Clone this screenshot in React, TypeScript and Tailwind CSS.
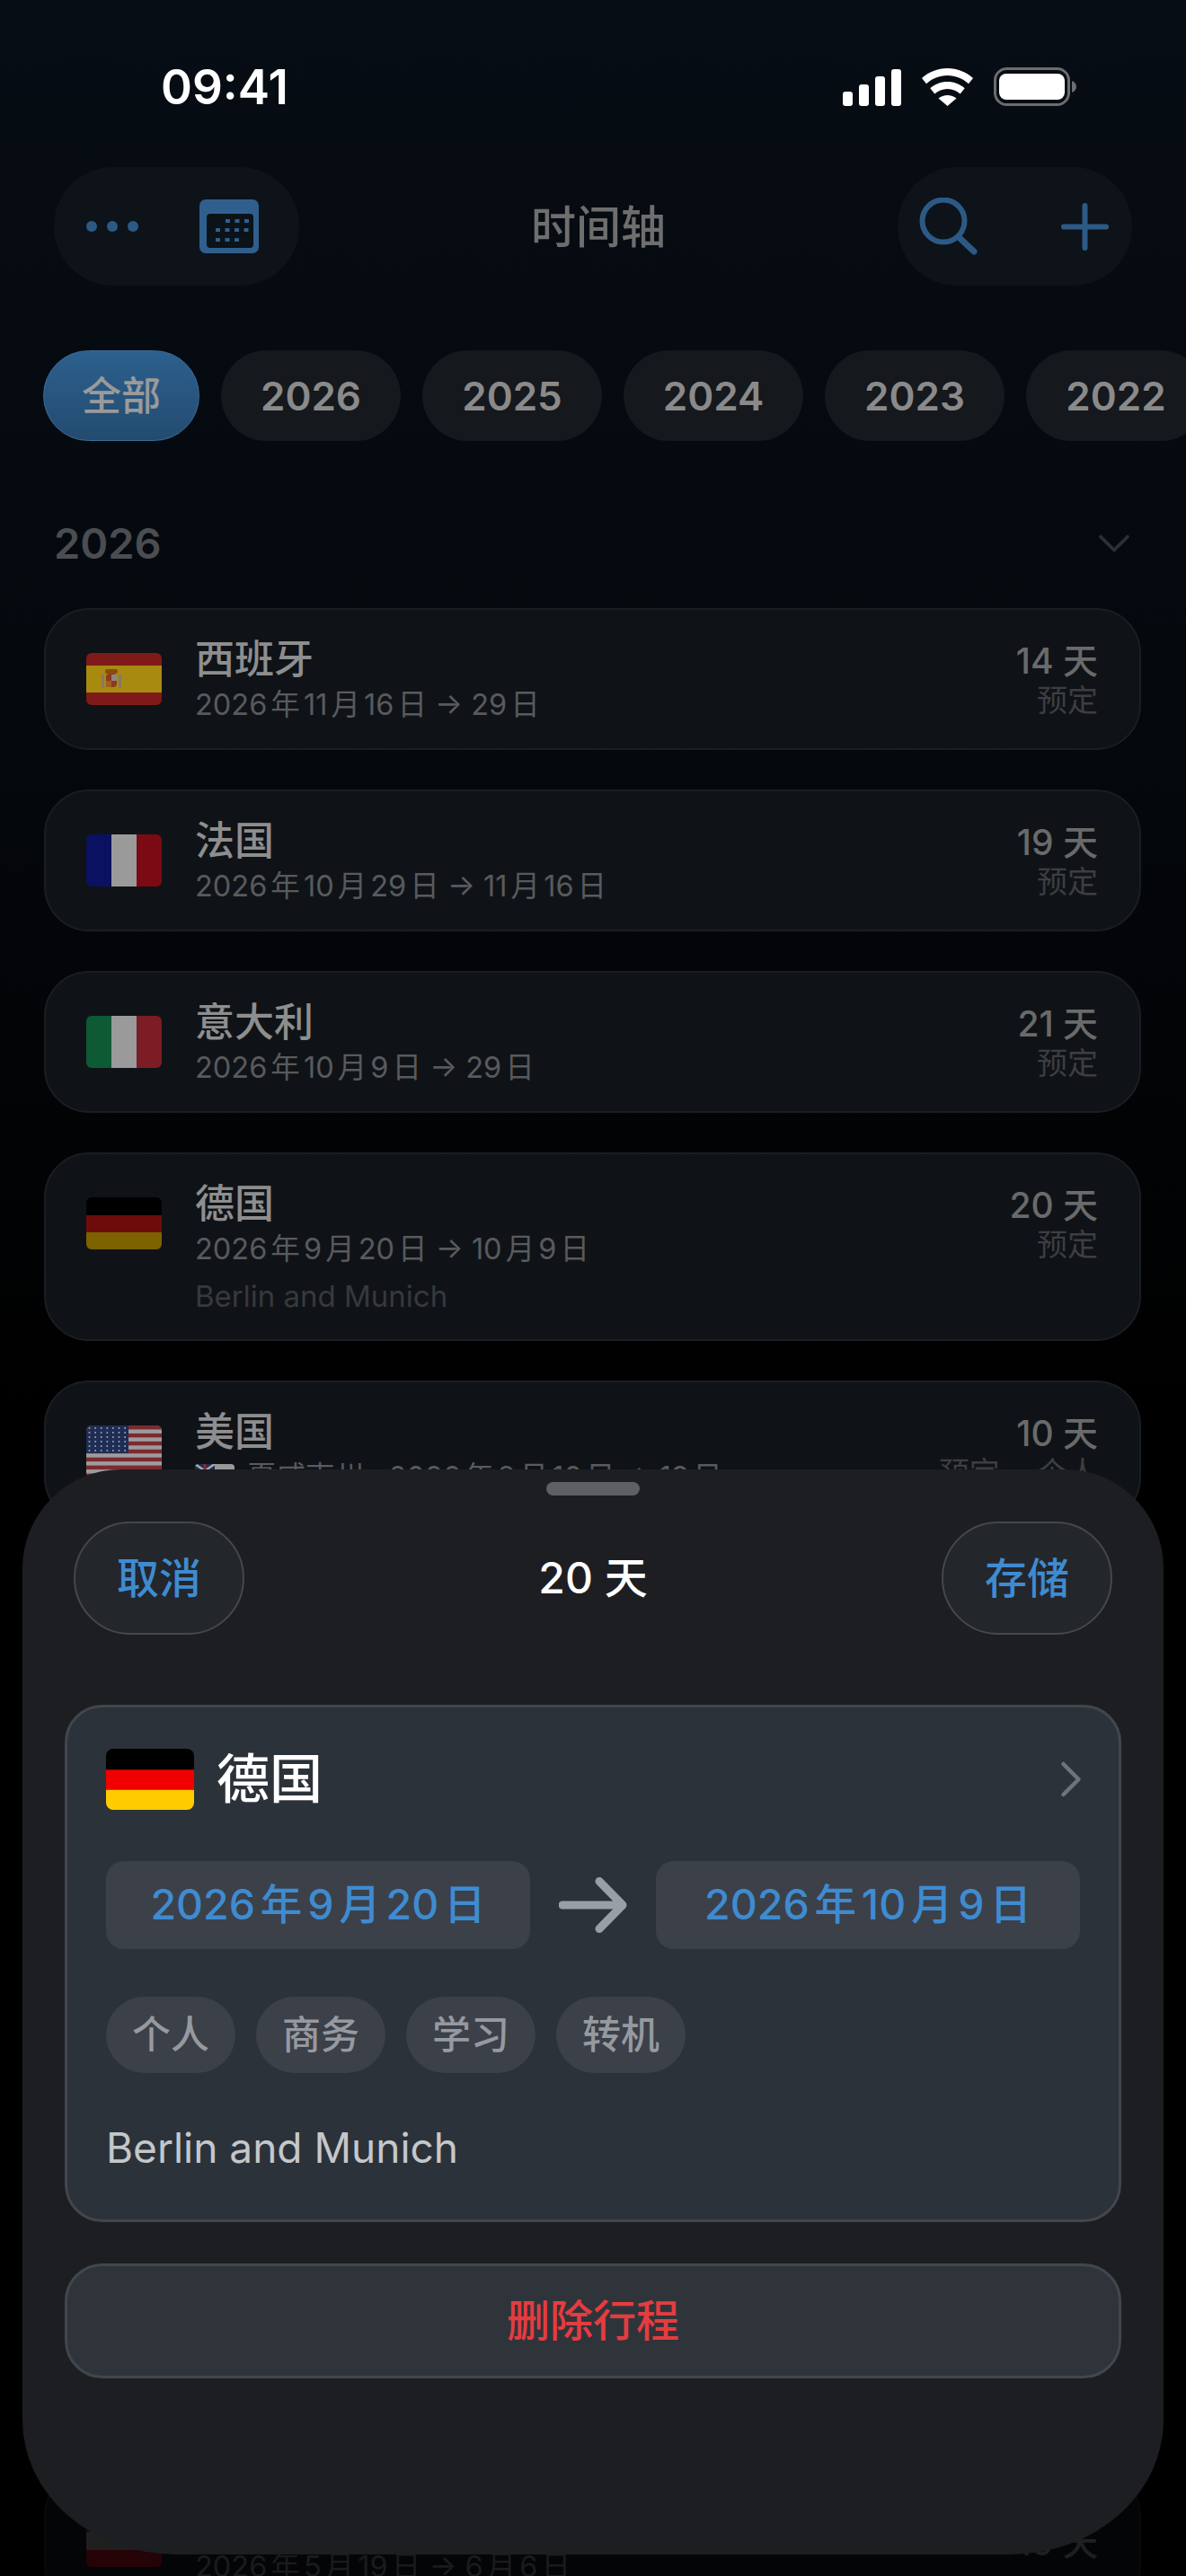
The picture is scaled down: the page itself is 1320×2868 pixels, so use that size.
import type { ReactNode } from 'react';
import { ChevronDown, ChevronRight } from 'lucide-react';

const FONT = "font-['Inter','Noto_Sans_CJK_SC',sans-serif]";

interface Trip {
    name: string;
    dates: string;
    days: string;
    status?: string;
    note?: string;
    flag: ReactNode;
    region?: ReactNode;
    lowDays?: boolean;
}

function Tricolor({ a, b, c }: { a: string; b: string; c: string }) {
    return (
        <svg viewBox="0 0 84 58" className="w-[84px] h-[58px] rounded-[6px] shrink-0">
            <rect width="28" height="58" x="0" fill={a} />
            <rect width="28" height="58" x="28" fill={b} />
            <rect width="28" height="58" x="56" fill={c} />
        </svg>
    );
}

function SpainFlag() {
    return (
        <svg viewBox="0 0 84 58" className="w-[84px] h-[58px] rounded-[6px] shrink-0">
            <rect width="84" height="58" fill="#7f1a18" />
            <rect width="84" height="30" y="14" fill="#a88a10" />
            {/* crown, shield and pillars of the arms */}
            <rect width="14" height="5" x="21" y="18" rx="2" fill="#8a4a18" />
            <rect width="12" height="15" x="22" y="23" rx="4" fill="#8c3a1c" />
            <rect width="6" height="7" x="28" y="24" fill="#8f8478" />
            <rect width="6" height="7" x="22" y="31" fill="#a0601c" />
            <rect width="3" height="15" x="17" y="24" fill="#85786a" />
            <rect width="3" height="15" x="36" y="24" fill="#85786a" />
        </svg>
    );
}

function GermanyFlag({ bright }: { bright?: boolean }) {
    const size = bright ? 'w-[98px] h-[68px] rounded-[8px]' : 'w-[84px] h-[58px] rounded-[6px]';
    return (
        <svg viewBox="0 0 84 58" preserveAspectRatio="none" className={`${size} shrink-0`}>
            <rect width="84" height="20" fill="#000" />
            <rect width="84" height="19" y="20" fill={bright ? '#f00000' : '#6e0c0c'} />
            <rect width="84" height="19" y="39" fill={bright ? '#ffcc00' : '#7d6200'} />
        </svg>
    );
}

function UsaFlag() {
    const stripes = Array.from({ length: 7 }, (_, i) => i * 2);
    const stars = Array.from({ length: 42 }, (_, i) => i);
    return (
        <svg viewBox="0 0 84 58" className="w-[84px] h-[58px] rounded-[6px] shrink-0">
            <rect width="84" height="58" fill="#9c9c9c" />
            {stripes.map((i) => (
                <rect key={i} y={i * 4.46} width="84" height="4.46" fill="#7c2a30" />
            ))}
            <rect width="47" height="31" fill="#1f2d55" />
            {stars.map((i) => (
                <circle key={i} cx={3.5 + (i % 7) * 6.6} cy={3 + Math.floor(i / 7) * 5} r="1" fill="#a0a3ad" />
            ))}
        </svg>
    );
}

function HawaiiFlag() {
    return (
        <svg viewBox="0 0 44 30" className="w-[44px] h-[30px] rounded-[4px] mr-[14px] shrink-0">
            <rect width="44" height="30" fill="#999" />
            <rect width="44" height="5" y="10" fill="#7c2a30" />
            <rect width="22" height="15" fill="#1f2d55" />
            <path d="M0 0L22 15M22 0L0 15" stroke="#aaa" strokeWidth="2.5" />
            <path d="M11 0V15M0 7.5H22" stroke="#8a2a30" strokeWidth="3" />
        </svg>
    );
}

function AustriaFlag() {
    return (
        <svg viewBox="0 0 84 58" className="w-[84px] h-[58px] rounded-[6px] shrink-0">
            <rect width="84" height="58" fill="#7c0a14" />
            <rect width="84" height="20" y="19" fill="#666" />
        </svg>
    );
}

const TRIPS: Trip[] = [
    { name: '西班牙', dates: '2026年11月16日 → 29日', days: '14 天', status: '预定', flag: <SpainFlag /> },
    { name: '法国', dates: '2026年10月29日 → 11月16日', days: '19 天', status: '预定', flag: <Tricolor a="#0a1160" b="#9a9a9a" c="#7c0a14" /> },
    { name: '意大利', dates: '2026年10月9日 → 29日', days: '21 天', status: '预定', flag: <Tricolor a="#0d5a34" b="#9a9a9a" c="#7c1c24" /> },
    { name: '德国', dates: '2026年9月20日 → 10月9日', days: '20 天', status: '预定', note: 'Berlin and Munich', flag: <GermanyFlag /> },
    { name: '美国', dates: '夏威夷州 · 2026年8月10日 → 19日', days: '10 天', status: '预定\u00a0\u2009·\u2009\u00a0个人', flag: <UsaFlag />, region: <HawaiiFlag /> },
];

function TripCard({ trip }: { trip: Trip }) {
    return (
        <div className="rounded-[50px] border-2 border-[#1a1e22] bg-[#0f1317] pl-[45px] pr-[46px] pt-[27px] pb-[27px] flex items-start">
            <div className="mt-[21px] mr-[37px]">{trip.flag}</div>
            <div className="flex-1 min-w-0">
                <div className="text-[44px] leading-[56px] font-medium text-[#8e8e8e]">{trip.name}</div>
                <div className="flex items-center text-[32.5px] leading-[42px] text-[#585a5c] mt-[2px]">
                    {trip.region}
                    <span>{trip.dates}</span>
                </div>
                {trip.note && <div className="text-[33px] leading-[42px] text-[#37393b] mt-[10px]">{trip.note}</div>}
            </div>
            <div className={`text-right ${trip.lowDays ? 'mt-[27px]' : 'mt-[5px]'}`}>
                <div className="text-[39px] leading-[50px] font-medium text-[#6a6a6a]">{trip.days}</div>
                {trip.status && <div className="text-[34px] leading-[38px] text-[#3c3e40]">{trip.status}</div>}
            </div>
        </div>
    );
}

function StatusBar() {
    return (
        <div className="h-[186px] flex justify-between items-start pt-[72px] pl-[179px] pr-[122px]">
            <div className="text-[53px] leading-[50px] font-semibold text-white">09:41</div>
            <div className="flex items-end gap-[23px] pt-[3px]">
                <svg viewBox="0 0 65 41" className="w-[65px] h-[41px]" fill="#fff">
                    <rect x="0" y="25" width="11" height="16" rx="3" />
                    <rect x="18" y="17" width="11" height="24" rx="3" />
                    <rect x="36" y="8" width="11" height="33" rx="3" />
                    <rect x="54" y="0" width="11" height="41" rx="3" />
                </svg>
                <svg viewBox="0 0 57 42" className="w-[57px] h-[42px]" fill="#fff">
                    <path d="M28.5 0C17.5 0 7.8 4 0 11l5 6.2C11.5 11.5 19.5 8 28.5 8s17 3.5 23.5 9.2l5-6.2C49.2 4 39.5 0 28.5 0Z" />
                    <path d="M28.5 15c-7.5 0-14 2.7-19.2 7.2l5 6.2c3.8-3.3 8.7-5.4 14.2-5.4s10.4 2.1 14.2 5.4l5-6.2C42.5 17.7 36 15 28.5 15Z" />
                    <path d="M28.5 30c-3.8 0-7.2 1.3-10 3.5L28.5 42l10-8.5c-2.8-2.2-6.2-3.5-10-3.5Z" />
                </svg>
                <svg viewBox="0 0 92 43" className="w-[92px] h-[43px]">
                    <rect x="1.5" y="1.5" width="82" height="40" rx="13" fill="none" stroke="#6b6d70" strokeWidth="3" />
                    <rect x="6" y="7" width="73" height="29" rx="8" fill="#fff" />
                    <path d="M87 15c3 1 5 3.5 5 6.5s-2 5.5-5 6.5Z" fill="#6b6d70" />
                </svg>
            </div>
        </div>
    );
}

function Toolbar() {
    return (
        <div className="flex items-center justify-between pl-[60px] pr-[60px]">
            <div className="w-[273px] h-[132px] rounded-full bg-[#0d1319] flex items-center justify-between pl-[36px] pr-[45px]">
                <div className="flex gap-[11px]">
                    <span className="w-[12px] h-[12px] rounded-full bg-[#2c5a85]" />
                    <span className="w-[12px] h-[12px] rounded-full bg-[#2c5a85]" />
                    <span className="w-[12px] h-[12px] rounded-full bg-[#2c5a85]" />
                </div>
                <svg viewBox="0 0 66 60" className="w-[66px] h-[60px]">
                    <rect width="66" height="60" rx="7" fill="#2f5f8d" />
                    <rect x="8" y="16" width="52" height="38" rx="4" fill="#0b1218" />
                    {[0, 1, 2].map((i) => <rect key={`a${i}`} x={29 + i * 10.5} y="22" width="5" height="4" fill="#2f5f8d" />)}
                    {[0, 1, 2, 3].map((i) => <rect key={`b${i}`} x={18 + i * 10.5} y="32" width="5" height="4" fill="#2f5f8d" />)}
                    {[0, 1, 2].map((i) => <rect key={`c${i}`} x={18 + i * 10.5} y="43" width="5" height="4" fill="#2f5f8d" />)}
                </svg>
            </div>
            <div className="text-[50px] font-medium text-[#6e6e6e] leading-none mt-[2px]">时间轴</div>
            <div className="w-[261px] h-[132px] rounded-full bg-[#0d1319] flex items-center justify-between pl-[24px] pr-[26px]">
                <svg viewBox="0 0 65 64" className="w-[65px] h-[64px]" fill="none" stroke="#2c5a85" strokeLinecap="round">
                    <circle cx="27" cy="26" r="23.5" strokeWidth="6" />
                    <path d="M44 44L61 60" strokeWidth="7" />
                </svg>
                <svg viewBox="0 0 53 53" className="w-[53px] h-[53px]" fill="none" stroke="#2c5a85" strokeWidth="6" strokeLinecap="round">
                    <path d="M26.5 3V50M3 26.5H50" />
                </svg>
            </div>
        </div>
    );
}

function YearChips() {
    return (
        <div className="flex gap-[24px] pl-[48px] mt-[72px] w-[1400px]">
            <div className="w-[174px] h-[101px] rounded-full bg-gradient-to-b from-[#2c608e] to-[#234b70] border border-[#3a6a94] flex items-center justify-center text-[44px] font-medium text-[#9a9a9a] shrink-0">全部</div>
            {['2026', '2025', '2024', '2023', '2022'].map((year) => (
                <div key={year} className="w-[200px] h-[101px] rounded-full bg-[#15181d] flex items-center justify-center text-[44px] font-semibold text-[#8a8a8a] shrink-0">{year}</div>
            ))}
        </div>
    );
}

function EditSheet() {
    return (
        <div className="absolute left-[25px] top-[1636px] w-[1270px] h-[1208px] rounded-t-[110px] rounded-bl-[170px_150px] rounded-br-[170px_150px] bg-[#1c1e22] px-[47px]">
            <div className="flex justify-center pt-[14px]">
                <div className="w-[104px] h-[15px] rounded-full bg-[#5e6066]" />
            </div>
            <div className="flex items-center justify-between mt-[29px] px-[10px]">
                <div className="w-[190px] h-[126px] rounded-full border-2 border-[#44474e] bg-[#23262b] flex items-center justify-center text-[47px] font-medium text-[#3f8bd0]">取消</div>
                <div className="text-[48px] font-medium text-white">20 天</div>
                <div className="w-[190px] h-[126px] rounded-full border-2 border-[#44474e] bg-[#23262b] flex items-center justify-center text-[47px] font-medium text-[#3f8bd0]">存储</div>
            </div>

            <div className="mt-[78px] h-[576px] rounded-[42px] border-[3px] border-[#42464d] bg-[#2c3239] px-[43px] pt-[46px]">
                <div className="flex items-center h-[68px]">
                    <GermanyFlag bright />
                    <div className="ml-[25px] text-[59px] font-medium text-white">德国</div>
                    <ChevronRight className="ml-auto -mr-[24px] text-[#6f747b] w-[68px] h-[68px]" strokeWidth={1.6} />
                </div>
                <div className="flex items-center justify-between mt-[57px]">
                    <div className="w-[472px] h-[98px] rounded-[20px] bg-[#3c4049] flex items-center justify-center text-[46.5px] font-medium text-[#3f8bd0]">2026年9月20日</div>
                    <svg viewBox="0 0 76 62" className="w-[76px] h-[62px]" fill="none" stroke="#9a9ea6" strokeWidth="9" strokeLinecap="round" strokeLinejoin="round">
                        <path d="M4 31H71M45 4.5L71 31L45 57.5" />
                    </svg>
                    <div className="w-[472px] h-[98px] rounded-[20px] bg-[#3c4049] flex items-center justify-center text-[46.5px] font-medium text-[#3f8bd0]">2026年10月9日</div>
                </div>
                <div className="flex gap-[23px] mt-[53px]">
                    {['个人', '商务', '学习', '转机'].map((tag) => (
                        <div key={tag} className="w-[144px] h-[85px] rounded-full bg-[#3c4049] flex items-center justify-center text-[43px] font-medium text-[#96999f]">{tag}</div>
                    ))}
                </div>
                <div className="mt-[53px] text-[46px] leading-[60px] text-[#c5c7ca]">Berlin and Munich</div>
            </div>

            <div className="mt-[46px] h-[128px] rounded-[42px] border-[3px] border-[#42464d] bg-[#2f343b] flex items-center justify-center text-[48px] font-medium text-[#e53c3f]">删除行程</div>
        </div>
    );
}

export default function App() {
    return (
        <div className={`${FONT} [text-autospace:normal] relative w-[1320px] h-[2868px] overflow-hidden bg-[linear-gradient(180deg,#070d14_0%,#05090e_25%,#000_55%)]`}>
            <StatusBar />
            <Toolbar />
            <YearChips />

            <div className="flex items-center justify-between pl-[60px] pr-[50px] mt-[92px] mb-[50px] h-[44px]">
                <div className="text-[47px] leading-[44px] font-semibold text-[#4a4d52]">2026</div>
                <ChevronDown className="w-[60px] h-[60px] text-[#2c3034]" strokeWidth={1.5} />
            </div>

            <div className="flex flex-col gap-[44px] mx-[49px] w-[1221px]">
                {TRIPS.map((trip) => <TripCard key={trip.name} trip={trip} />)}
                {/* the trips between these two lie fully under the sheet */}
                <div className="mt-[1011px] opacity-30">
                    <TripCard trip={{ name: '奥地利', dates: '2026年5月19日 → 6月6日', days: '19 天', flag: <AustriaFlag />, lowDays: true }} />
                </div>
            </div>

            <EditSheet />
        </div>
    );
}
